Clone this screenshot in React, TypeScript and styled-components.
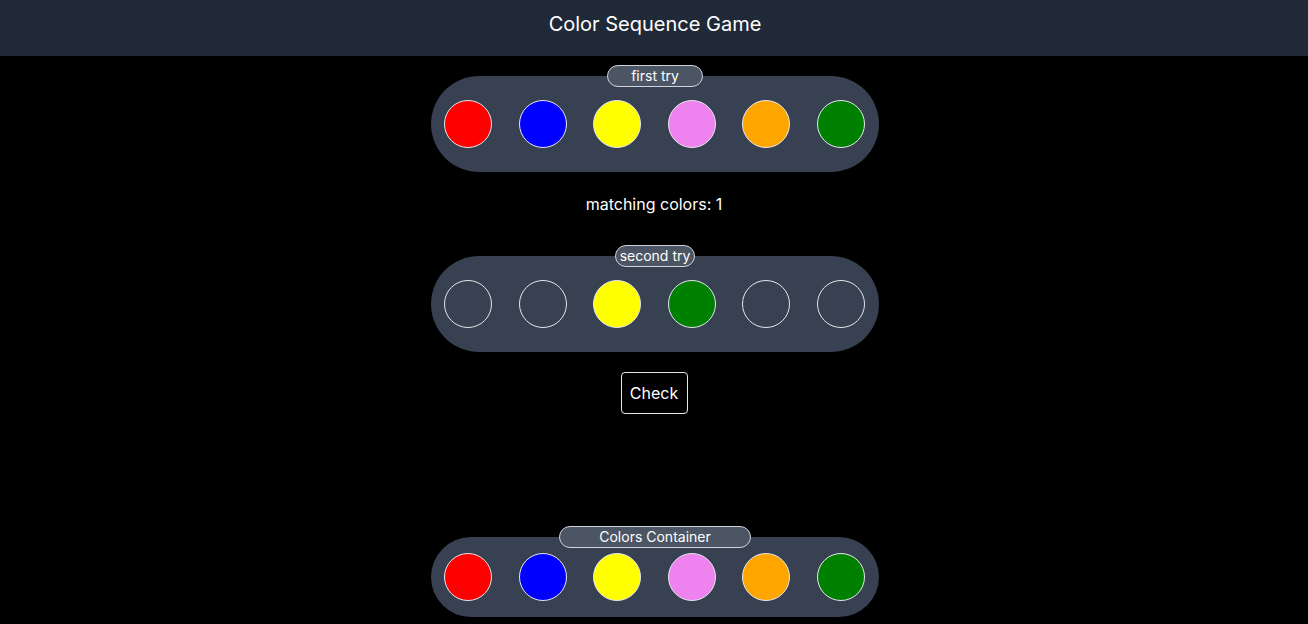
import React from "react";
import styled, { createGlobalStyle } from "styled-components";

const GlobalStyle = createGlobalStyle`
  html, body {
    margin: 0;
    padding: 0;
    background: #000000;
  }
  body {
    font-family: Inter, "Noto Sans", sans-serif;
    color: #ffffff;
  }
`;

const Page = styled.div`
  min-height: 100vh;
  display: flex;
  flex-direction: column;
  background: #000000;
`;

const Header = styled.header`
  height: 56px;
  box-sizing: border-box;
  padding-top: 10px;
  background: #1f2937;
  text-align: center;
`;

const Title = styled.h1`
  margin: 0;
  font-size: 20px;
  line-height: 28px;
  font-weight: 400;
  color: #ffffff;
  transform: translateX(1px);
`;

const Main = styled.main`
  flex: 1;
  display: flex;
  flex-direction: column;
  align-items: center;
  padding-top: 20px;
  padding-bottom: 7px;
`;

const Tray = styled.div<{ $pad: number }>`
  position: relative;
  width: 448px;
  box-sizing: border-box;
  padding: ${(p) => p.$pad}px 14px ${(p) => p.$pad}px 13px;
  background: #374151;
  border-radius: 9999px;
  display: flex;
  justify-content: space-between;
  align-items: center;
  transform: translateX(1px);
`;

const Label = styled.div<{ $w: number }>`
  position: absolute;
  top: -11px;
  left: 50%;
  transform: translateX(-50%);
  width: ${(p) => p.$w}px;
  height: 22px;
  box-sizing: border-box;
  border: 1px solid #d1d5db;
  border-radius: 9999px;
  background: #4b5563;
  color: #ffffff;
  font-size: 14px;
  font-weight: 400;
  line-height: 20px;
  text-align: center;
  white-space: nowrap;
`;

const Circle = styled.div<{ $color?: string }>`
  width: 48px;
  height: 48px;
  box-sizing: border-box;
  border-radius: 50%;
  border: 1px solid #e5e7eb;
  background: ${(p) => p.$color ?? "transparent"};
`;

const Matching = styled.p`
  margin: 20px 0 40px;
  font-size: 16px;
  line-height: 24px;
  color: #ffffff;
`;

const CheckButton = styled.button`
  margin-top: 20px;
  width: 67px;
  height: 42px;
  box-sizing: border-box;
  background: #000000;
  color: #ffffff;
  border: 1px solid #e5e7eb;
  border-radius: 4px;
  font-family: Inter, "Noto Sans", sans-serif;
  font-size: 16px;
  padding: 0;
`;

const Bottom = styled.div`
  margin-top: auto;
`;

const palette = ["red", "blue", "yellow", "violet", "orange", "green"];
const second: (string | undefined)[] = [undefined, undefined, "yellow", "green", undefined, undefined];

export default function App() {
  return (
    <Page>
      <GlobalStyle />
      <Header>
        <Title>Color Sequence Game</Title>
      </Header>
      <Main>
        <Tray $pad={24}>
          <Label $w={96}>first try</Label>
          {palette.map((c, i) => (
            <Circle key={i} $color={c} />
          ))}
        </Tray>
        <Matching>matching colors: 1</Matching>
        <Tray $pad={24}>
          <Label $w={80}>second try</Label>
          {second.map((c, i) => (
            <Circle key={i} $color={c} />
          ))}
        </Tray>
        <CheckButton>Check</CheckButton>
        <Bottom>
          <Tray $pad={16}>
            <Label $w={192}>Colors Container</Label>
            {palette.map((c, i) => (
              <Circle key={i} $color={c} />
            ))}
          </Tray>
        </Bottom>
      </Main>
    </Page>
  );
}
